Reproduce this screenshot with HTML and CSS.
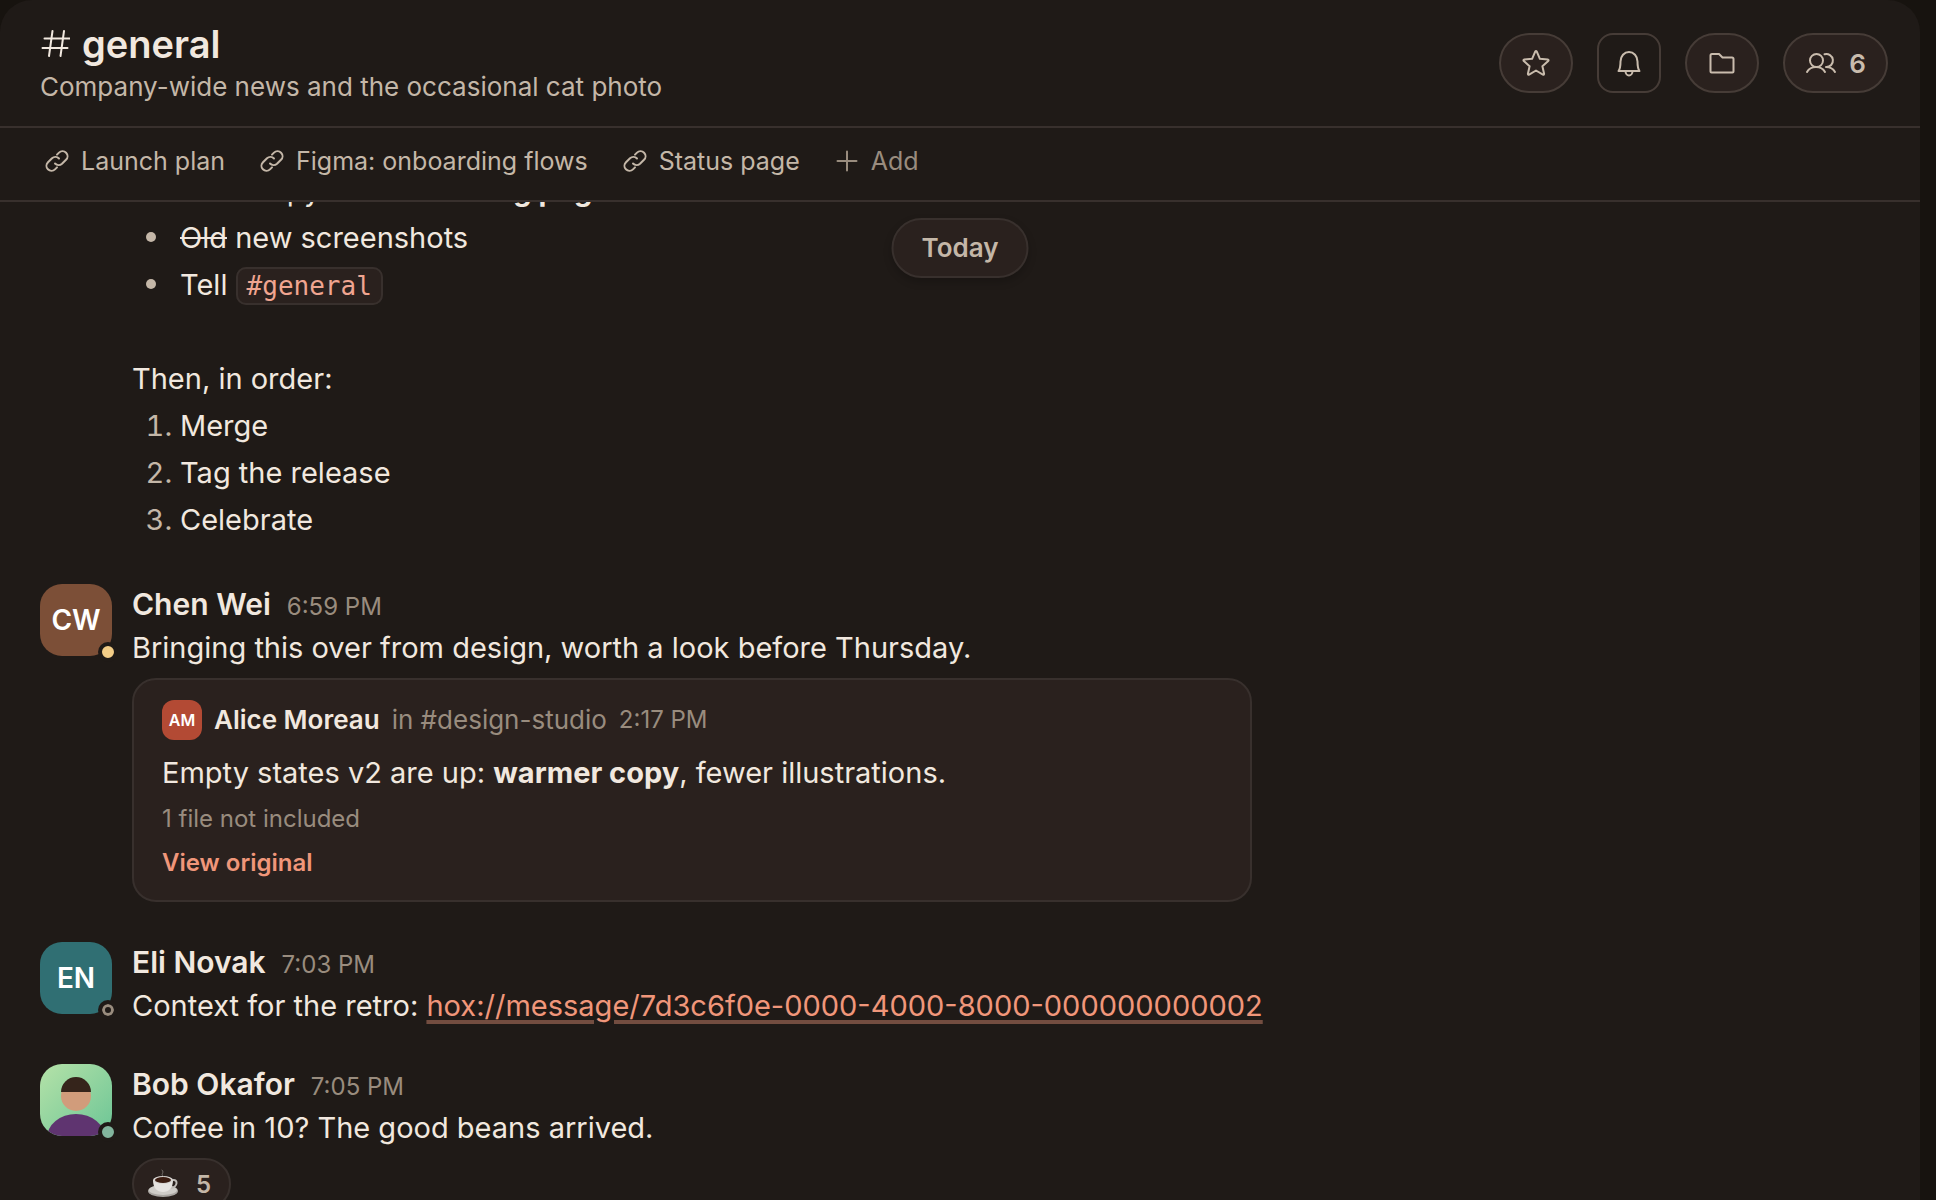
FILE: index.html
```html
<!DOCTYPE html>
<html lang="en">
<head>
    <meta charset="UTF-8">
    <meta name="viewport" content="width=device-width, initial-scale=1.0">
    <title>#general</title>
    <link rel="stylesheet" href="styles.css">
</head>
<body>
    <main class="channel">
        <header class="channel-header">
            <div class="channel-info">
                <h1 class="channel-name">
                    <svg class="icon-hash" viewBox="0 0 30 30" aria-hidden="true"><path d="M12.500 2 9 27M24 2l-3.500 25M4.500 9.500h25M2.500 19h25"/></svg>
                    general
                </h1>
                <p class="channel-topic">Company-wide news and the occasional cat photo</p>
            </div>
            <div class="channel-actions">
                <button class="action-btn" aria-label="Star channel">
                    <svg class="icon" viewBox="0 0 28 28" aria-hidden="true"><path d="M13.200 2.600q.8-1.200 1.600 0L17.900 9.800l7.800.7q1.400.4.500 1.500l-5.800 5.200 1.700 7.600q0 1.300-1.200.8L14 21.500l-6.900 4.100q-1.200.5-1.200-.8l1.700-7.600L1.800 12q-.9-1.100.5-1.500l7.800-.7z"/></svg>
                </button>
                <button class="action-btn square" aria-label="Notifications">
                    <svg class="icon" viewBox="0 0 28 28" aria-hidden="true"><path d="M3.500 22c1.500-2 2-4.500 2-9.500a8.500 9.500 0 0 1 17 0c0 5 .5 7.500 2 9.500zM10.500 22a3.500 4.500 0 0 0 7 0"/></svg>
                </button>
                <button class="action-btn" aria-label="Files">
                    <svg class="icon" viewBox="0 0 28 28" aria-hidden="true"><path d="M2.500 22.500V6.500a1.500 1.500 0 0 1 1.500-1.500h7l3.500 3.500H24a1.500 1.500 0 0 1 1.500 1.500v12.500a1 1 0 0 1-1 1h-21a1 1 0 0 1-1-1z"/></svg>
                </button>
                <button class="action-btn members" aria-label="6 members">
                    <svg class="icon-members" viewBox="0 0 32 28" aria-hidden="true"><path d="M2 23c2-3.500 5-5 9-5s7 1.500 9 5"/><circle cx="11.500" cy="11.500" r="6.500"/><path d="M19.500 5.300a6.500 6.500 0 1 1 1.500 12.700c4 0 7 1.500 9 5"/></svg>
                    6
                </button>
            </div>
        </header>

        <nav class="bookmarks">
            <a class="bookmark" href="#launch-plan">
                <svg class="icon-link" viewBox="0 0 24 24" aria-hidden="true"><path d="M10 14.500a5 5 0 0 0 7 .3l4-4a5 5 0 0 0-7-7.200l-2 2M14 9.500a5 5 0 0 0-7-.3l-4 4a5 5 0 0 0 7 7.200l2-2"/></svg>
                Launch plan
            </a>
            <a class="bookmark" href="#figma">
                <svg class="icon-link" viewBox="0 0 24 24" aria-hidden="true"><path d="M10 14.500a5 5 0 0 0 7 .3l4-4a5 5 0 0 0-7-7.200l-2 2M14 9.500a5 5 0 0 0-7-.3l-4 4a5 5 0 0 0 7 7.200l2-2"/></svg>
                Figma: onboarding flows
            </a>
            <a class="bookmark" href="#status">
                <svg class="icon-link" viewBox="0 0 24 24" aria-hidden="true"><path d="M10 14.500a5 5 0 0 0 7 .3l4-4a5 5 0 0 0-7-7.200l-2 2M14 9.500a5 5 0 0 0-7-.3l-4 4a5 5 0 0 0 7 7.200l2-2"/></svg>
                Status page
            </a>
            <button class="bookmark add">
                <svg class="icon-link" viewBox="0 0 24 24" aria-hidden="true"><path d="M12 2.500v19M2.500 12h19"/></svg>
                Add
            </button>
        </nav>

        <section class="timeline">
            <div class="day-label">Today</div>
            <div class="messages" id="messages">
                <article class="message continued">
                    <div class="message-body">
                        <ul class="text">
                            <li>Final copy for the <strong>landing page</strong></li>
                            <li><s>Old</s> new screenshots</li>
                            <li>Tell <code>#general</code></li>
                        </ul>
                        <p class="text spaced">Then, in order:</p>
                        <ol class="text">
                            <li>Merge</li>
                            <li>Tag the release</li>
                            <li>Celebrate</li>
                        </ol>
                    </div>
                </article>

                <article class="message">
                    <div class="avatar brown">CW<span class="status away"></span></div>
                    <div class="message-body">
                        <div class="message-meta">
                            <span class="author">Chen Wei</span>
                            <time class="time">6:59 PM</time>
                        </div>
                        <p class="text">Bringing this over from design, worth a look before Thursday.</p>
                        <div class="shared">
                            <div class="shared-meta">
                                <div class="avatar small red">AM</div>
                                <span class="shared-author">Alice Moreau</span>
                                <span class="shared-from">in #design-studio</span>
                                <time class="time">2:17 PM</time>
                            </div>
                            <p class="text">Empty states v2 are up: <strong>warmer copy</strong>, fewer illustrations.</p>
                            <p class="shared-note">1 file not included</p>
                            <a class="shared-link" href="#original">View original</a>
                        </div>
                    </div>
                </article>

                <article class="message">
                    <div class="avatar teal">EN<span class="status offline"></span></div>
                    <div class="message-body">
                        <div class="message-meta">
                            <span class="author">Eli Novak</span>
                            <time class="time">7:03 PM</time>
                        </div>
                        <p class="text">Context for the retro: <a class="text-link" href="hox://message/7d3c6f0e-0000-4000-8000-000000000002">hox://message/7d3c6f0e-0000-4000-8000-000000000002</a></p>
                    </div>
                </article>

                <article class="message">
                    <div class="avatar">
                        <svg class="portrait" viewBox="0 0 72 72" aria-hidden="true">
                            <defs>
                                <linearGradient id="mint" x1="0" y1="0" x2="1" y2="1">
                                    <stop offset="0" stop-color="#b5e2a8"/>
                                    <stop offset="1" stop-color="#6cc596"/>
                                </linearGradient>
                            </defs>
                            <rect width="72" height="72" fill="url(#mint)"/>
                            <ellipse cx="36" cy="74" rx="29" ry="24" fill="#5f3470"/>
                            <circle cx="36" cy="32" r="15" fill="#d19c7b"/>
                            <path d="M21 28a15 15 0 0 1 30 0z" fill="#35241b"/>
                        </svg>
                        <span class="status online"></span>
                    </div>
                    <div class="message-body">
                        <div class="message-meta">
                            <span class="author">Bob Okafor</span>
                            <time class="time">7:05 PM</time>
                        </div>
                        <p class="text">Coffee in 10? The good beans arrived.</p>
                        <button class="reaction" aria-label="Coffee, 5 reactions">
                            <svg class="coffee" viewBox="0 0 30 30" aria-hidden="true">
                                <ellipse cx="15" cy="22" rx="15" ry="6" fill="#a9a5a1"/>
                                <ellipse cx="15" cy="21" rx="14" ry="5" fill="#cfccc8"/>
                                <path d="M25 11c5-1 5 7-2 8" fill="none" stroke="#c0bcb8" stroke-width="2"/>
                                <path d="M5 11c0 8 4 12 10 12s10-4 10-12z" fill="#e6e3e0"/>
                                <ellipse cx="15" cy="11" rx="10" ry="4" fill="#d9d6d3"/>
                                <ellipse cx="15" cy="11" rx="8" ry="3" fill="#3b1d12"/>
                                <path d="M15 7c-3-2 2-3-1-6" fill="none" stroke="#77716c" stroke-width="1"/>
                            </svg>
                            5
                        </button>
                    </div>
                </article>
            </div>
        </section>
    </main>

    <script>
        const lastRead = 35;
        document.getElementById('messages').scrollTop = lastRead;
    </script>
</body>
</html>
```
FILE: styles.css
```css
* {
    box-sizing: border-box;
}

body {
    margin: 0;
    padding-right: 16px;
    background: #17130f;
    color: #f1e8df;
    font-family: Inter, sans-serif;
    font-size: 30px;
}

h1, p, ul, ol {
    margin: 0;
    padding: 0;
}

button {
    font-family: inherit;
    cursor: pointer;
}

svg {
    flex: none;
    fill: none;
    stroke: currentColor;
    stroke-width: 2;
    stroke-linecap: round;
    stroke-linejoin: round;
}

.channel {
    display: flex;
    flex-direction: column;
    height: 100vh;
    background: #1f1a17;
    border-radius: 32px 32px 0 0;
    overflow: hidden;
}

/* Header */
.channel-header {
    display: flex;
    justify-content: space-between;
    align-items: center;
    padding: 21px 32px 21px 40px;
    border-bottom: 2px solid #38302d;
}

.channel-name {
    display: flex;
    align-items: center;
    gap: 12px;
    font-size: 38px;
    line-height: 46px;
    font-weight: 600;
}

.icon-hash {
    width: 30px;
    height: 30px;
}

.channel-topic {
    margin-top: 2px;
    font-size: 26px;
    line-height: 36px;
    color: #c4b7a8;
}

.channel-actions {
    display: flex;
    gap: 24px;
}

.action-btn {
    display: flex;
    align-items: center;
    justify-content: center;
    gap: 12px;
    height: 60px;
    padding: 0 21px;
    border: 2px solid #463c37;
    border-radius: 30px;
    background: #2a211e;
    color: #c9bcad;
    font-size: 26px;
    font-weight: 600;
}

.action-btn.square {
    padding: 0 16px;
    border-radius: 16px;
    background: #1f1a17;
}

.action-btn.members {
    padding: 0 20px;
}

.icon {
    width: 28px;
    height: 28px;
}

.icon-members {
    width: 32px;
    height: 28px;
}

/* Bookmarks */
.bookmarks {
    display: flex;
    gap: 35px;
    padding: 15px 45px 21px;
    border-bottom: 2px solid #38302d;
}

.bookmark {
    display: flex;
    align-items: center;
    gap: 12px;
    padding: 0;
    border: 0;
    background: none;
    color: #c4b7a8;
    font-size: 25px;
    line-height: 36px;
    text-decoration: none;
}

.bookmark.add {
    color: #998c7e;
}

.icon-link {
    width: 24px;
    height: 24px;
}

/* Timeline */
.timeline {
    position: relative;
    flex: 1;
    min-height: 0;
}

.day-label {
    position: absolute;
    top: 16px;
    left: 50%;
    transform: translateX(-50%);
    padding: 10px 28px;
    border: 2px solid #38302d;
    border-radius: 30px;
    background: #2a211e;
    box-shadow: 0 4px 8px rgba(0, 0, 0, 0.2);
    color: #c4b7a8;
    font-size: 26px;
    line-height: 36px;
    font-weight: 600;
}

.messages {
    display: flex;
    flex-direction: column;
    gap: 35px;
    height: 100%;
    padding: 0 40px 40px;
    overflow-y: auto;
    scrollbar-width: none;
}

.message {
    display: flex;
    gap: 20px;
}

.message.continued {
    padding-left: 92px;
}

.message-body {
    flex: 1;
    min-width: 0;
}

.message-meta {
    display: flex;
    align-items: baseline;
    gap: 16px;
    line-height: 40px;
}

.author {
    font-weight: 600;
}

.time {
    color: #998c7e;
    font-size: 24px;
    line-height: 30px;
}

.text {
    font-size: 29px;
    line-height: 47px;
}

.text.spaced {
    margin-top: 47px;
}

strong {
    font-weight: 700;
}

ul.text, ol.text {
    padding-left: 48px;
}

ul.text {
    list-style: none;
}

ul.text li::before {
    content: "";
    display: inline-block;
    width: 10px;
    height: 10px;
    margin: 0 24px 0 -34px;
    border-radius: 50%;
    background: #c4b7a8;
    vertical-align: 6px;
}

ol.text {
    margin-bottom: 6px;
}

ol.text li::marker {
    color: #c4b7a8;
}

code {
    padding: 2px 9px;
    border: 2px solid #38302d;
    border-radius: 10px;
    background: #2a211e;
    color: #f0a590;
    font-family: "DejaVu Sans Mono", monospace;
    font-size: 26px;
    line-height: 30px;
}

.text-link {
    color: #f0967a;
    text-decoration-color: #734d40;
    text-decoration-thickness: 4px;
    text-underline-offset: 4px;
}

/* Avatars */
.avatar {
    position: relative;
    display: flex;
    flex: none;
    align-items: center;
    justify-content: center;
    width: 72px;
    height: 72px;
    border-radius: 22px;
    color: #fff;
    font-size: 28px;
    font-weight: 600;
}

.avatar.small {
    width: 40px;
    height: 40px;
    border-radius: 12px;
    font-size: 16px;
}

.avatar.brown {
    background: #7c4f37;
}

.avatar.red {
    background: #b34a34;
}

.avatar.teal {
    background: #306f73;
}

.portrait {
    width: 72px;
    height: 72px;
    border-radius: 22px;
    stroke: none;
}

.status {
    position: absolute;
    right: -6px;
    bottom: -6px;
    width: 20px;
    height: 20px;
    border: 4px solid #1f1a17;
    border-radius: 50%;
}

.status.away {
    background: #f3cd87;
}

.status.online {
    background: #82b59d;
}

.status.offline {
    background: #1f1a17;
    box-shadow: inset 0 0 0 3px #998c7e;
}

/* Shared message card */
.shared {
    max-width: 1120px;
    margin: 7px 0 5px;
    padding: 20px 28px 15px;
    border: 2px solid #38302d;
    border-radius: 24px;
    background: #2a211e;
}

.shared-meta {
    display: flex;
    align-items: center;
    gap: 12px;
    margin-bottom: 9px;
    line-height: 40px;
}

.shared-author {
    font-size: 26px;
    font-weight: 600;
}

.shared-from {
    color: #998c7e;
    font-size: 26px;
}

.shared-note,
.shared-link {
    display: block;
    font-size: 24px;
    line-height: 44px;
}

.shared-note {
    margin-top: 1px;
    color: #998c7e;
}

.shared-link {
    color: #f0967a;
    font-weight: 600;
    text-decoration: none;
}

/* Reactions */
.reaction {
    display: flex;
    align-items: center;
    gap: 18px;
    height: 52px;
    margin-top: 7px;
    padding: 0 18px 0 14px;
    border: 2px solid #38302d;
    border-radius: 26px;
    background: #2a211e;
    color: #c4b7a8;
    font-size: 24px;
    font-weight: 600;
}

.coffee {
    width: 30px;
    height: 30px;
    stroke: none;
}
```
